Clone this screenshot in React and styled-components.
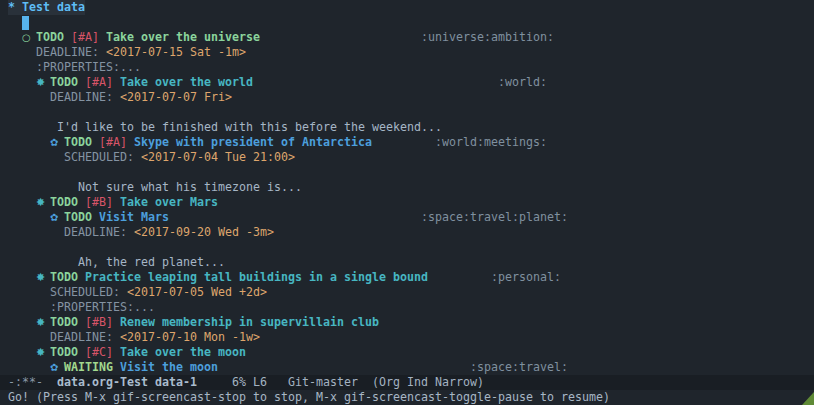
import styled, { createGlobalStyle } from 'styled-components';

const GlobalStyle = createGlobalStyle`
  html, body {
    margin: 0;
    padding: 0;
    background: #1f252c;
  }
`;

const COL = 7;

const levelColors = {
  2: '#8bd49c',
  3: '#47b6c2',
  4: '#4c9fdc',
};

const bullets = { 2: '○', 3: '✸', 4: '✿' };
const bulletSizes = { 2: '10px', 3: '11px', 4: '10px' };

const Frame = styled.div`
  position: relative;
  width: 814px;
  height: 405px;
  overflow: hidden;
  background: #1f252c;
  color: #a0b3c5;
  font-family: 'DejaVu Sans Mono', 'Liberation Mono', monospace;
  font-size: 11.63px;
  display: flex;
  flex-direction: column;
`;

const Buffer = styled.div`
  flex: 1;
  display: flex;
  flex-direction: column;
`;

const Line = styled.div`
  height: 15px;
  line-height: 15px;
  padding-left: 8px;
  white-space: pre;
`;

const TitleText = styled.span`
  display: inline-block;
  font-weight: bold;
  color: #5ebdf5;
  background: #29313a;
`;

const Cursor = styled.span`
  display: inline-block;
  width: 7px;
  height: 14px;
  margin-top: 1px;
  background: #57b3ec;
  vertical-align: top;
`;

const Bullet = styled.span`
  display: inline-block;
  width: ${COL}px;
  height: 15px;
  overflow: visible;
  text-align: center;
  color: ${(p) => levelColors[p.$level]};
  font-family: 'DejaVu Sans', sans-serif;
  font-size: ${(p) => bulletSizes[p.$level]};
  font-weight: ${(p) => (p.$level === 3 ? 'bold' : 'normal')};
  vertical-align: top;
`;

const Todo = styled.span`
  font-weight: bold;
  color: ${(p) => (p.$waiting ? '#a2d98e' : '#8bd49c')};
`;

const Priority = styled.span`
  color: #d95468;
`;

const Title = styled.span`
  font-weight: bold;
  color: ${(p) => levelColors[p.$level]};
`;

const Tag = styled.span`
  color: #7f909f;
`;

const Keyword = styled.span`
  color: #8493a2;
`;

const Timestamp = styled.span`
  color: #dea56c;
`;

const Body = styled.span`
  color: #a6b6c6;
`;

const ModeLine = styled.div`
  height: 15px;
  line-height: 15px;
  padding-left: 8px;
  white-space: pre;
  background: #191e24;
  color: #a3b2c1;
`;

const ModeFlags = styled.span`
  color: #8a99a8;
`;

const BufferName = styled.span`
  font-weight: bold;
  color: #a9bccd;
`;

const Echo = styled.div`
  height: 15px;
  line-height: 15px;
  padding-left: 8px;
  white-space: pre;
  color: #a8b7c6;
`;

const Grip = styled.svg`
  position: absolute;
  right: 0;
  bottom: 0;
`;

const lines = [
  { type: 'title' },
  { type: 'cursor' },
  { type: 'heading', level: 2, indent: 2, todo: 'TODO', pri: 'A', title: 'Take over the universe', tags: ':universe:ambition:', tagCol: 59 },
  { type: 'planning', indent: 4, key: 'DEADLINE:', date: '<2017-07-15 Sat -1m>' },
  { type: 'drawer', indent: 4 },
  { type: 'heading', level: 3, indent: 4, todo: 'TODO', pri: 'A', title: 'Take over the world', tags: ':world:', tagCol: 70 },
  { type: 'planning', indent: 6, key: 'DEADLINE:', date: '<2017-07-07 Fri>' },
  { type: 'blank' },
  { type: 'text', indent: 7, text: "I'd like to be finished with this before the weekend..." },
  { type: 'heading', level: 4, indent: 6, todo: 'TODO', pri: 'A', title: 'Skype with president of Antarctica', tags: ':world:meetings:', tagCol: 61 },
  { type: 'planning', indent: 8, key: 'SCHEDULED:', date: '<2017-07-04 Tue 21:00>' },
  { type: 'blank' },
  { type: 'text', indent: 10, text: 'Not sure what his timezone is...' },
  { type: 'heading', level: 3, indent: 4, todo: 'TODO', pri: 'B', title: 'Take over Mars' },
  { type: 'heading', level: 4, indent: 6, todo: 'TODO', title: 'Visit Mars', tags: ':space:travel:planet:', tagCol: 59 },
  { type: 'planning', indent: 8, key: 'DEADLINE:', date: '<2017-09-20 Wed -3m>' },
  { type: 'blank' },
  { type: 'text', indent: 10, text: 'Ah, the red planet...' },
  { type: 'heading', level: 3, indent: 4, todo: 'TODO', title: 'Practice leaping tall buildings in a single bound', tags: ':personal:', tagCol: 69 },
  { type: 'planning', indent: 6, key: 'SCHEDULED:', date: '<2017-07-05 Wed +2d>' },
  { type: 'drawer', indent: 6 },
  { type: 'heading', level: 3, indent: 4, todo: 'TODO', pri: 'B', title: 'Renew membership in supervillain club' },
  { type: 'planning', indent: 6, key: 'DEADLINE:', date: '<2017-07-10 Mon -1w>' },
  { type: 'heading', level: 3, indent: 4, todo: 'TODO', pri: 'C', title: 'Take over the moon' },
  { type: 'heading', level: 4, indent: 6, todo: 'WAITING', title: 'Visit the moon', tags: ':space:travel:', tagCol: 66 },
];

const sp = (n) => ' '.repeat(Math.max(n, 1));

const Heading = ({ l }) => {
  const pri = l.pri ? `[#${l.pri}] ` : '';
  const used = l.indent + 2 + l.todo.length + 1 + pri.length + l.title.length;
  return (
    <Line>
      {sp(l.indent)}
      <Bullet $level={l.level}>{bullets[l.level]}</Bullet>{' '}
      <Todo $waiting={l.todo === 'WAITING'}>{l.todo}</Todo>{' '}
      {l.pri && <Priority>[#{l.pri}]</Priority>}
      {l.pri && ' '}
      <Title $level={l.level}>{l.title}</Title>
      {l.tags && (
        <>
          {sp(l.tagCol - used)}
          <Tag>{l.tags}</Tag>
        </>
      )}
    </Line>
  );
};

const renderLine = (l, i) => {
  switch (l.type) {
    case 'title':
      return (
        <Line key={i}>
          <TitleText>* Test data</TitleText>
        </Line>
      );
    case 'cursor':
      return (
        <Line key={i}>
          {'  '}
          <Cursor />
        </Line>
      );
    case 'heading':
      return <Heading key={i} l={l} />;
    case 'planning':
      return (
        <Line key={i}>
          {sp(l.indent)}
          <Keyword>{l.key}</Keyword> <Timestamp>{l.date}</Timestamp>
        </Line>
      );
    case 'drawer':
      return (
        <Line key={i}>
          {sp(l.indent)}
          <Keyword>:PROPERTIES:...</Keyword>
        </Line>
      );
    case 'text':
      return (
        <Line key={i}>
          {sp(l.indent)}
          <Body>{l.text}</Body>
        </Line>
      );
    default:
      return <Line key={i} />;
  }
};

export default function App() {
  return (
    <Frame>
      <GlobalStyle />
      <Buffer>{lines.map(renderLine)}</Buffer>
      <ModeLine>
        <ModeFlags>-:**-</ModeFlags>
        {'  '}
        <BufferName>data.org-Test data-1</BufferName>
        {'     6% L6   Git-master  (Org Ind Narrow)'}
      </ModeLine>
      <Echo>Go! (Press M-x gif-screencast-stop to stop, M-x gif-screencast-toggle-pause to resume)</Echo>
      <Grip width="12" height="13" viewBox="0 0 12 13">
        <polygon points="12,0 12,13 0,13" fill="#5f8a36" />
      </Grip>
    </Frame>
  );
}
